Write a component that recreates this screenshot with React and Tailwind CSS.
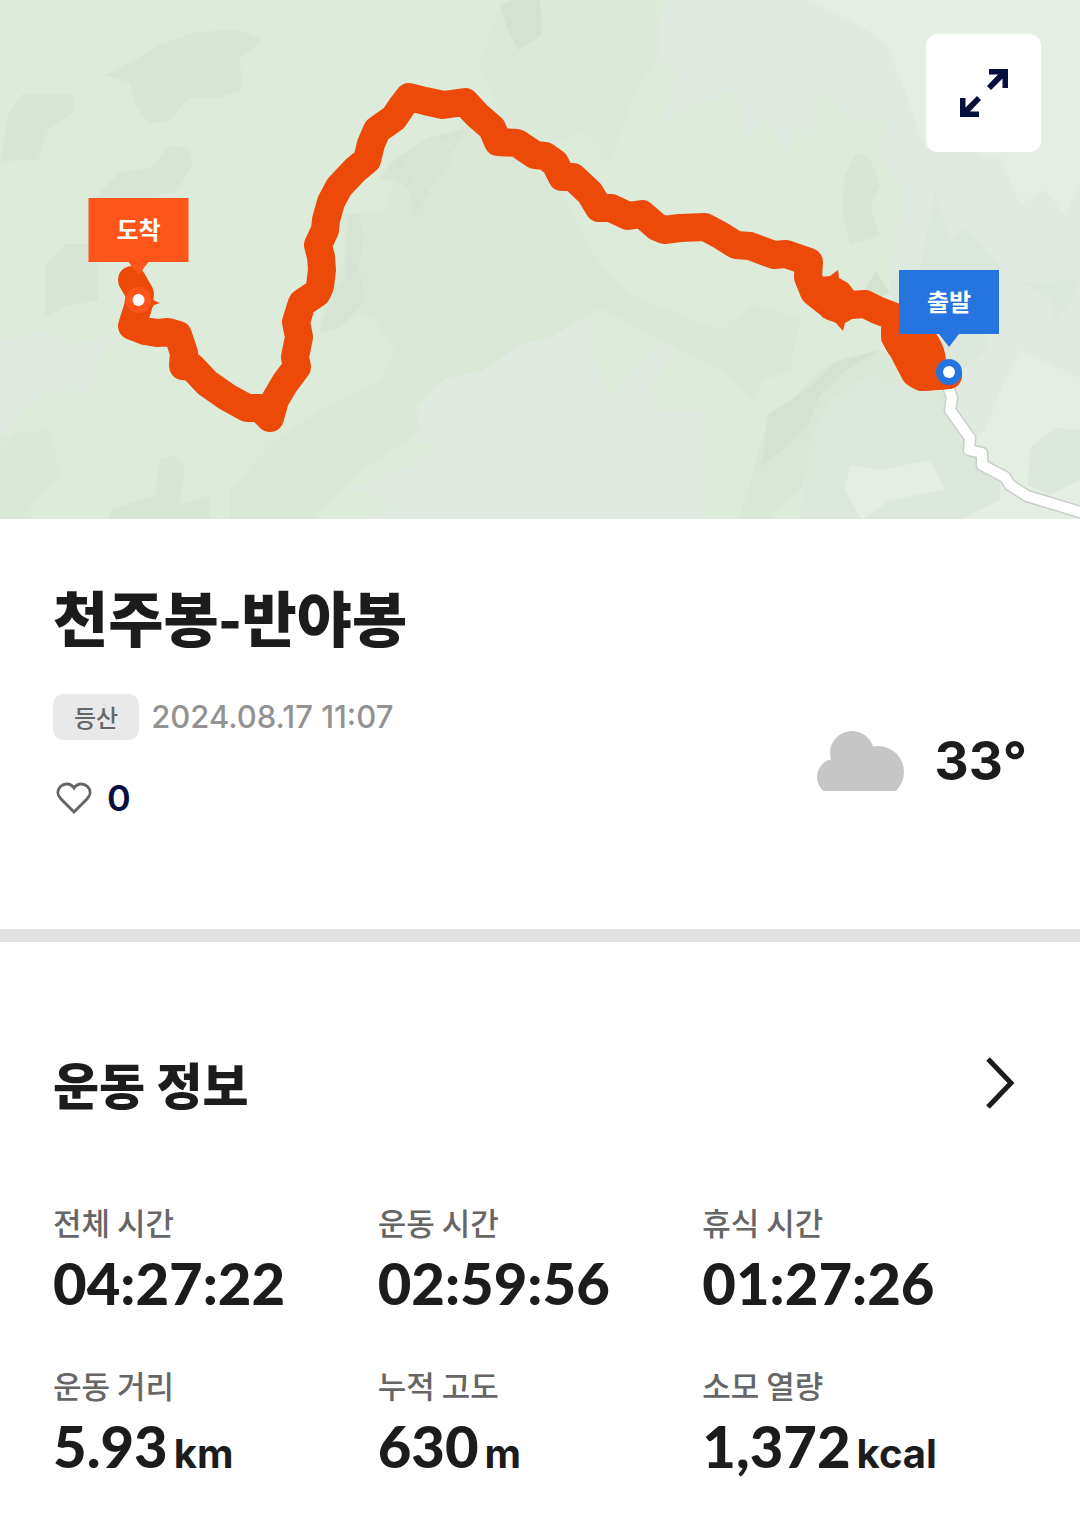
const STATS = [
  { label: '전체 시간', value: '04:27:22' },
  { label: '운동 시간', value: '02:59:56' },
  { label: '휴식 시간', value: '01:27:26' },
  { label: '운동 거리', value: '5.93', unit: 'km' },
  { label: '누적 고도', value: '630', unit: 'm' },
  { label: '소모 열량', value: '1,372', unit: 'kcal' },
]

const ROUTE =
  '132,280 140,294 138,307 132,326 145,331 157,333 168,332 178,335 184,353 183,366 192,367 207,383 227,397 247,408 260,408 270,418 275,400 285,383 297,367 295,357 299,337 296,322 302,303 317,293 320,286 322,270 321,257 318,245 325,230 326,220 331,202 339,187 355,170 367,160 371,144 377,130 394,118 402,106 409,97 425,101 443,105 465,102 477,115 492,128 498,142 517,143 535,155 545,156 555,163 562,177 573,177 590,193 599,208 611,208 628,216 642,214 657,227 664,230 680,228 705,227 720,235 736,245 750,246 774,255 786,254 809,262 808,277 814,292 833,307 850,305 865,304 877,310 895,317 895,337 903,350 915,373 922,377 948,375'

const ROAD = '948,386 952,398 950,410 970,438 969,450 982,453 982,465 1005,477 1010,485 1027,496 1090,515'

function Pin({ x, y, color, label }) {
  return (
    <g transform={`translate(${x} ${y})`}>
      <path d="M-50 -102H50V-38H10L0 -25L-10 -38H-50Z" fill={color} />
      <circle r="13" fill={color} />
      <circle r="6" fill="#fff" />
      <text y="-61" textAnchor="middle" fill="#fff" className="text-[24px] font-bold">{label}</text>
    </g>
  )
}

function Terrain() {
  return (
    <g>
      <rect width="1080" height="520" fill="#dcebda" />

      {/* grey-green open ground */}
      <g fill="#e0eae0">
        <path d="M668 0H1080V520H363L395 505L352 488L415 465L435 445L408 440L420 405L445 378L480 372L520 345L550 338L590 308L596 365L610 398L640 360L672 338L677 350L650 385L655 410H708L700 470L706 520H860L880 320L905 190L875 152L890 120L850 118L820 88L812 148L800 115L785 155L765 115L742 150L738 88L660 122L678 70L645 58Z" />
        <path d="M0 340L50 330L68 345L115 335L95 365L88 400L70 385L40 395L12 420V445L0 450Z" />
      </g>
      <g fill="#e4eee3">
        <path d="M805 0H1080V180L1065 215L1045 190L1020 205L1000 155L985 160L955 130L925 150L905 90L885 42L850 20Z" />
        <path d="M1020 350L1080 378V520H850L848 485L875 480L870 450L900 420L960 450L985 430L1005 380Z" />
      </g>

      {/* woods */}
      <g fill="#d8e7d5">
        <path d="M104 75L135 60L160 45L195 32L240 30L263 40L240 58L242 90L218 98L190 97L170 120L150 124L135 105L130 83Z" />
        <path d="M22 94L74 95V112L48 130L38 160L0 161L8 115Z" />
        <path d="M92 200L120 172L150 168L170 146L190 148L192 165L178 190L140 202Z" />
        <path d="M45 265L65 244H98V300L65 307L45 318Z" />
        <path d="M480 62L500 10L520 0H655L662 50L635 90L610 160L585 130L545 145L508 130L490 90Z" opacity="0.5" />
        <path d="M400 155L465 125L500 145L560 190L590 250L630 295L720 330L755 305L800 320L790 370L765 380L750 400L720 370L600 308L550 338L520 345L480 372L445 378L415 405L420 430L370 465L345 485L310 520H230V490L275 440L320 410L380 380L395 350L375 320L345 300L350 270L375 250Z" opacity="0.75" />
        <path d="M430 200L475 210L508 222L490 250L440 255V290L405 318L380 300L350 320L318 330L330 290L345 255L340 215L360 215Z" opacity="0.6" />
        <path d="M0 435L50 430L60 475L20 520H0Z" opacity="0.6" />
        <path d="M108 520L110 510L155 495L160 460L175 455L185 468L180 505L210 495V520Z" />
        <path d="M845 175L855 153L870 158L880 185L870 208L880 235L850 245L842 210Z" />
        <path d="M890 280L920 270L935 190L950 240L965 228L1000 265L985 350L960 370L910 345L895 320Z" opacity="0.4" />
        <path d="M745 500L765 430L820 370L880 350L920 375L955 400L965 440L900 410L830 425L800 490L765 520H740Z" opacity="0.8" />
      </g>
      <path d="M810 440L830 400L870 375L930 390L970 440L1000 470V500L960 520H800Z" fill="#dde8dc" />
      <path d="M1030 448L1055 428L1080 430V480L1050 495L1028 485Z" fill="#dde8dc" />
      <path d="M1022 283L1080 280L1072 300L1055 318L1050 300Z" fill="#dde8dc" />
      <path d="M845 490L850 465L880 470L930 460L945 490L890 500L862 520Z" fill="#e4eee3" />

      {/* gullies */}
      <g fill="#d3e2d1">
        <path d="M500 5L515 0H540L542 35L518 50L507 28Z" />
        <path d="M380 178L390 163L430 137L465 130L445 165L415 214L410 190L402 182Z" opacity="0.7" />
        <path d="M348 215L358 213L364 240L358 265L365 300L340 328L320 332L335 285L345 280Z" opacity="0.6" />
        <path d="M762 465L768 415L790 400L812 385L835 362L880 350L845 370L820 395L808 425L780 452Z" />
        <path d="M862 292L876 272L890 292L878 300Z" />
      </g>
      <path d="M402 165L415 145L440 138L453 145L450 165L430 188L415 184Z" fill="#d8e7d5" />
    </g>
  )
}

function RouteMap() {
  return (
    <div className="relative">
      <svg
        viewBox="0 0 1080 519"
        preserveAspectRatio="xMidYMid slice"
        className="block w-full"
        role="img"
        aria-label="이동 경로 지도"
      >
        <Terrain />
        <g fill="none" strokeLinejoin="round" strokeLinecap="round">
          <polyline points={ROAD} stroke="#c8cec8" strokeWidth="13" />
          <polyline points={ROAD} stroke="#fff" strokeWidth="10" />
          <polyline points={ROUTE} stroke="#ed4a0a" strokeWidth="28" />
        </g>
        <g fill="#ed4a0a">
          <path d="M148 296L155 301L160 303L154 305L148 314Z" />
          <path d="M820 277L830 276L838 270L839 278L848 283L855 292L866 310L852 319L845 323L843 331L836 323L822 317L815 295Z" />
          <path d="M886 322C878 340 886 357 902 364C897 378 908 388 922 391L950 389C958 388 962 382 962 374L946 366C947 350 940 336 928 325Z" />
        </g>
        <Pin x={138.5} y={300} color="#ff541a" label="도착" />
        <Pin x={949} y={372} color="#2674e0" label="출발" />
      </svg>
      <button
        type="button"
        aria-label="지도 확대"
        className="absolute top-[34px] right-[39px] flex h-[118px] w-[115px] items-center justify-center rounded-xl bg-white"
      >
        <svg width="48" height="48" viewBox="0 0 48 48" fill="#05103f">
          <path d="M29 0H48V19H42.500V9.500L31 21L27 17L38 5.500H29Z" />
          <path d="M19 48H0V29H5.500V38.500L17 27L21 31L10 42.500H19Z" />
        </svg>
      </button>
    </div>
  )
}

function Stat({ label, value, unit }) {
  return (
    <div>
      <dt className="text-[31px] leading-[44px] font-medium text-[#666]">{label}</dt>
      <dd className="flex items-baseline gap-1.5 leading-[78px] text-[#1c1c1c]">
        <span className="font-[Lato,'Noto_Sans_CJK_KR',sans-serif] text-[58px] font-black">{value}</span>
        {unit && <span className="font-[Inter,'Noto_Sans_CJK_KR',sans-serif] text-[40px] font-bold">{unit}</span>}
      </dd>
    </div>
  )
}

export default function App() {
  return (
    <main className="min-h-screen bg-white font-['Noto_Sans_CJK_KR',sans-serif] text-[#1c1c1c]">
      <RouteMap />

      <section className="flex items-end justify-between px-[53px] pt-[57px] pb-[105px]">
        <div>
          <h1 className="text-[60px] leading-[80px] font-black">천주봉-반야봉</h1>
          <div className="mt-[38px] flex items-center gap-3">
            <span className="flex h-[46px] items-center rounded-[10px] bg-[#e9e9e9] px-[21px] text-[24px] font-medium text-[#666]">등산</span>
            <time className="font-[Inter,sans-serif] text-[31px] leading-[46px] font-medium text-[#929292]">2024.08.17 11:07</time>
          </div>
          <button type="button" aria-label="좋아요 0" className="mt-8 flex h-[52px] items-center gap-3.5">
            <svg width="40" height="36" viewBox="0 0 40 36" fill="none" stroke="#666" strokeWidth="3">
              <path d="M21 32L8 19C4 15 4 10 7.500 6.500C12 2.500 18 3.500 21 8C24 3.500 30 2.500 34.500 6.500C38 10 38 15 34 19Z" />
            </svg>
            <span className="font-[Inter,sans-serif] text-[36px] font-semibold text-[#05103f]">0</span>
          </button>
        </div>
        <div className="flex h-[128px] items-start gap-[30px]">
          <svg width="88" height="60" viewBox="0 0 88 60" className="mt-[35px]" fill="#c6c6c6" role="img" aria-label="흐림">
            <circle cx="18" cy="46" r="18" />
            <circle cx="35" cy="22" r="22" />
            <circle cx="61" cy="41" r="26" />
            <rect x="14" y="28" width="50" height="32" />
          </svg>
          <p className="mt-[30px] font-[Inter,sans-serif] text-[53px] leading-[70px] font-bold">33°</p>
        </div>
      </section>

      <div className="h-[13px] bg-[#e2e2e2]" />

      <section className="px-[53px] pt-[105px] pb-6">
        <div className="flex items-center justify-between">
          <h2 className="text-[50px] leading-[72px] font-black">운동 정보</h2>
          <a href="#detail" aria-label="운동 정보 자세히 보기" className="pr-3">
            <svg width="30" height="52" viewBox="0 0 30 52" fill="none" stroke="#1c1c1c" strokeWidth="5">
              <path d="M3 2L26 26L3 50" />
            </svg>
          </a>
        </div>
        <dl className="mt-[81px] grid grid-cols-3 gap-y-[41px]">
          {STATS.map((s) => <Stat key={s.label} {...s} />)}
        </dl>
      </section>
    </main>
  )
}
